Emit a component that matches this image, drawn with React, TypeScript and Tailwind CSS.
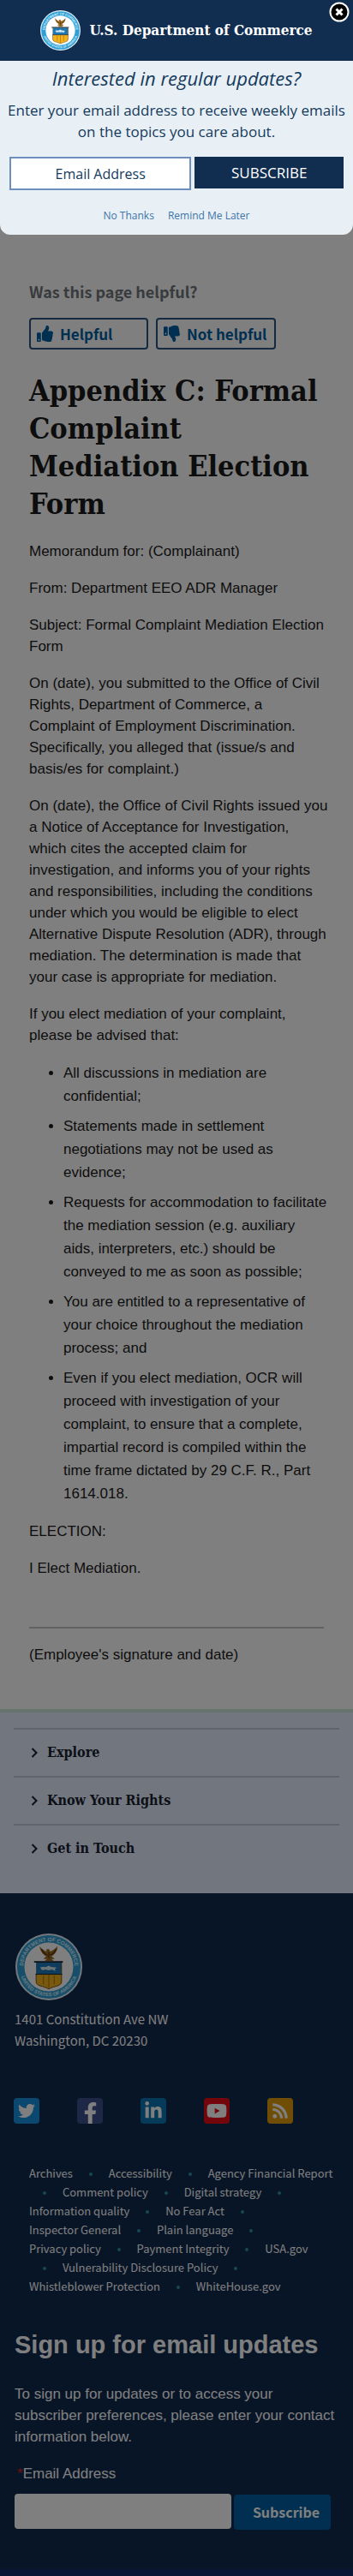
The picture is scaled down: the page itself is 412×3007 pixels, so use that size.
import React from "react";
import {
  FaThumbsUp,
  FaThumbsDown,
  FaTwitter,
  FaFacebookF,
  FaLinkedinIn,
  FaYoutube,
  FaRss,
} from "react-icons/fa";

const serif = "font-['DejaVu_Serif_Condensed','DejaVu_Serif',serif] font-bold";
const source = "font-['Noto_Sans_CJK_SC',sans-serif]";

function Seal({ id, className }: { id: string; className: string }) {
  return (
    <svg viewBox="0 0 100 100" className={className} role="img" aria-label="Department of Commerce seal">
      <defs>
        <path id={id + "-top"} d="M11.5 50a38.5 38.5 0 0 1 77 0" />
        <path id={id + "-bottom"} d="M6 50a44 44 0 0 0 88 0" />
      </defs>
      <circle cx="50" cy="50" r="50" fill="#e4f0f8" />
      <circle cx="50" cy="50" r="47.5" fill="#2f9fd6" />
      <circle cx="50" cy="50" r="36.5" fill="#ffffff" />
      <g fill="#d9f1fb" fontSize="8" fontFamily="Liberation Sans, sans-serif" fontWeight="700" textAnchor="middle">
        <text>
          <textPath href={"#" + id + "-top"} startOffset="50%">DEPARTMENT OF COMMERCE</textPath>
        </text>
        <text fontSize="7.5">
          <textPath href={"#" + id + "-bottom"} startOffset="50%">UNITED STATES OF AMERICA</textPath>
        </text>
      </g>
      <path
        d="M36 19c1 7 5 13 10 15l-4 4h5l-3 3h13l-3-3h5l-5-4c5-2 9-8 9-15-3 4-8 7-11 8l-2-4-4 1 1 3c-4-1-8-4-11-8z"
        fill="#9a6a22"
      />
      <path d="M39 23c2 5 5 8 9 9M61 23c-2 5-5 8-9 9M50 28v9" stroke="#4a2c08" strokeWidth="1.3" fill="none" />
      <path d="M31 43h38v29c0 7-10 6-19 11-9-5-19-4-19-11z" fill="#f3b21b" />
      <path d="M31 43h38v18H31z" fill="#1d78b8" />
      <path d="M31 61v11c0 7 10 6 19 11 9-5 19-4 19-11V43" stroke="#6b4b12" strokeWidth="1.2" fill="none" />
      <path d="M50 62v19M42 63v13M58 63v13" stroke="#a8700c" strokeWidth="1.3" />
      <path d="M28 42.500h43" stroke="#16212e" strokeWidth="2" />
      <path d="M30 61h40" stroke="#16212e" strokeWidth="1.3" />
      <path d="M37 51c5-2 6 0 9-1l4-2 3 2 9 1-3 2 1 3-6-2-4 1-5-1-5 1z" fill="#d8e7ef" />
    </svg>
  );
}

function Popup() {
  return (
    <section
      aria-label="Email updates"
      className="absolute inset-x-0 top-0 z-20 overflow-hidden rounded-b-xl bg-[#e8f0f6] text-center font-['Open_Sans',sans-serif] text-[#153a5b]"
    >
      <header className="flex h-[71px] items-center justify-center gap-[10px] bg-[#112e51]">
        <Seal id="seal-popup" className="size-[47px]" />
        <span className={serif + " text-[17px] text-white"}>U.S. Department of Commerce</span>
      </header>
      <button type="button" aria-label="Close" className="absolute top-[2px] right-[4px]">
        <svg viewBox="0 0 24 24" className="size-6">
          <circle cx="12" cy="12" r="10.500" fill="#000" stroke="#fff" strokeWidth="2" />
          <path d="M8.500 8.500l7 7M15.500 8.500l-7 7" stroke="#fff" strokeWidth="3" />
        </svg>
      </button>
      <form className="px-2 pt-1 pb-[10px]" onSubmit={(e) => e.preventDefault()}>
        <h2 className="text-[22px] leading-8 italic">Interested in regular updates?</h2>
        <p className="mt-[9px] text-[17px] leading-[25px]">
          Enter your email address to receive weekly emails on the topics you care about.
        </p>
        <div className="mx-[3px] mt-[17px] flex items-start gap-1">
          <input
            type="email"
            aria-label="Email Address"
            placeholder="Email Address"
            className="h-[39px] min-w-0 flex-[6] border-2 border-[#6d8fbd] bg-white text-center text-[16px] text-[#153a5b] placeholder:text-[#153a5b]"
          />
          <button type="submit" className="h-[37px] flex-[5] bg-[#112e51] text-[17px] text-white">
            SUBSCRIBE
          </button>
        </div>
        <div className="mt-[18px] flex justify-center gap-4 text-[12px] leading-6 text-[#3d74a8]">
          <a href="#no">No Thanks</a>
          <a href="#later">Remind Me Later</a>
        </div>
      </form>
    </section>
  );
}

const points = [
  "All discussions in mediation are confidential;",
  "Statements made in settlement negotiations may not be used as evidence;",
  "Requests for accommodation to facilitate the mediation session (e.g. auxiliary aids, interpreters, etc.) should be conveyed to me as soon as possible;",
  "You are entitled to a representative of your choice throughout the mediation process; and",
  "Even if you elect mediation, OCR will proceed with investigation of your complaint, to ensure that a complete, impartial record is compiled within the time frame dictated by 29 C.F. R., Part 1614.018.",
];

const links = [
  "Archives",
  "Accessibility",
  "Agency Financial Report",
  "Comment policy",
  "Digital strategy",
  "Information quality",
  "No Fear Act",
  "Inspector General",
  "Plain language",
  "Privacy policy",
  "Payment Integrity",
  "USA.gov",
  "Vulnerability Disclosure Policy",
  "Whistleblower Protection",
  "WhiteHouse.gov",
];

const social = [
  { name: "Twitter", tile: "bg-[#1590e0] items-center", glyph: <FaTwitter className="size-5" /> },
  { name: "Facebook", tile: "bg-[#3f4f8c] items-end", glyph: <FaFacebookF className="size-[25px]" /> },
  { name: "LinkedIn", tile: "bg-[#0a76b0] items-center", glyph: <FaLinkedinIn className="size-[22px]" /> },
  { name: "YouTube", tile: "bg-[#e60d14] items-center", glyph: <FaYoutube className="size-6" /> },
  { name: "RSS", tile: "bg-[#e09a08] items-center", glyph: <FaRss className="size-5" /> },
];

function Article() {
  return (
    <main className="pt-[325px] pr-[26px] pb-[51px] pl-[34px] text-[17px] leading-[25px] text-[#1b1b1b]">
      <p className={source + " text-[18px] leading-[30px] font-bold text-[#71767a]"}>Was this page helpful?</p>
      <div className={source + " mt-[16px] flex gap-[9px] text-[17px] font-bold text-[#005ea2]"}>
        <button
          type="button"
          className="flex h-[37px] w-[139px] items-center gap-2 rounded border-2 border-[#2b5580] pl-[7px]"
        >
          <FaThumbsUp className="size-[19px]" />
          Helpful
        </button>
        <button
          type="button"
          className="flex h-[37px] w-[140px] items-center gap-2 rounded border-2 border-[#2b5580] pl-[7px] whitespace-nowrap"
        >
          <FaThumbsDown className="size-[19px] shrink-0" />
          Not helpful
        </button>
      </div>
      <h1 className={serif + " mt-[26px] text-[34px] leading-[44px]"}>
        Appendix C: Formal Complaint Mediation Election Form
      </h1>
      <div className="mt-[21px] flex flex-col gap-[18px]">
        <p>Memorandum for: (Complainant)</p>
        <p>From: Department EEO ADR Manager</p>
        <p>Subject: Formal Complaint Mediation Election Form</p>
        <p>
          On (date), you submitted to the Office of Civil Rights, Department of Commerce, a Complaint of Employment
          Discrimination. Specifically, you alleged that (issue/s and basis/es for complaint.)
        </p>
        <p>
          On (date), the Office of Civil Rights issued you a Notice of Acceptance for Investigation, which&nbsp;cites
          the accepted claim for investigation, and informs you of your rights and responsibilities, including the
          conditions under which you would be eligible to elect Alternative Dispute Resolution (ADR), through
          mediation. The determination is made that your case is appropriate for mediation.
        </p>
        <p>If you elect mediation of your complaint, please be advised that:</p>
        <ul className="flex list-disc flex-col gap-2 pr-1 pl-10 leading-[27px]">
          {points.map((p) => (
            <li key={p}>{p}</li>
          ))}
        </ul>
        <p>ELECTION:</p>
        <p>I Elect Mediation.</p>
      </div>
      <hr className="mt-14 mr-2 mb-[18px] border-t-2 border-[#c4c4c4]" />
      <p>(Employee's signature and date)</p>
    </main>
  );
}

function Footer() {
  return (
    <footer>
      <nav className="border-t-4 border-[#cfe6da] bg-[#e4ecfc] px-4 pt-[18px] pb-[25px]">
        {["Explore", "Know Your Rights", "Get in Touch"].map((t) => (
          <button
            key={t}
            type="button"
            className={serif + " flex h-14 w-full items-center gap-2 border-t-2 border-[#c2c9d8] pl-[17px] text-[16px] text-[#16202f]"}
          >
            <svg viewBox="0 0 14 14" className="size-[14px]" fill="none" stroke="currentColor" strokeWidth="2">
              <path d="M4.500 2l5 5-5 5" />
            </svg>
            {t}
          </button>
        ))}
      </nav>
      <div className="bg-[#112a4e] px-4 pt-[47px] text-white">
        <Seal id="seal-footer" className="ml-[2px] size-[78px]" />
        <address className={source + " mt-[9px] ml-px text-[15px] leading-[25px] not-italic"}>
          1401 Constitution Ave NW
          <br />
          Washington, DC 20230
        </address>
        <div className="mt-[55px] flex gap-11">
          {social.map((s) => (
            <a
              key={s.name}
              href={"#" + s.name}
              aria-label={s.name}
              className={"flex size-[30px] justify-center rounded overflow-hidden " + s.tile}
            >
              {s.glyph}
            </a>
          ))}
        </div>
        <div className={source + " mt-[47px] pr-px pl-[18px] text-[13px] leading-[22px]"}>
          {links.map((l, i) => (
            <React.Fragment key={l}>
              {i > 0 && (
                <>
                  {" "}
                  <span aria-hidden="true" className="mx-4 inline-block size-1 rounded-full bg-[#2e8fa8] align-middle" />{" "}
                </>
              )}
              <a href={"#" + l} className="whitespace-nowrap">
                {l}
              </a>
            </React.Fragment>
          ))}
        </div>
        <form className="pt-[38px] pb-[46px] pl-px text-[17px] leading-[25px]" onSubmit={(e) => e.preventDefault()}>
          <h2 className="text-[29px] leading-[38px] font-bold">Sign up for email updates</h2>
          <p className="mt-[26px]">
            To sign up for updates or to access your subscriber preferences, please enter your contact information
            below.
          </p>
          <label htmlFor="footer-email" className="mt-[18px] block pl-[3px]">
            <span className="text-[#e02020]">*</span>Email Address
          </label>
          <div className="mt-[11px] mr-[10px] flex items-start gap-[3px]">
            <input id="footer-email" type="email" className="h-[41px] min-w-0 flex-1 rounded-sm bg-white px-2 text-black" />
            <button
              type="submit"
              className={source + " mt-px h-[41px] w-[113px] rounded-sm bg-[#005ea2] pl-[9px] text-[16px] font-bold"}
            >
              Subscribe
            </button>
          </div>
        </form>
      </div>
      <div className="h-2 bg-[#112a68]" />
    </footer>
  );
}

export default function App() {
  return (
    <div className="relative bg-white font-['Liberation_Sans',sans-serif]">
      <Article />
      <Footer />
      <div className="absolute inset-0 z-10 bg-black/50" />
      <Popup />
    </div>
  );
}
